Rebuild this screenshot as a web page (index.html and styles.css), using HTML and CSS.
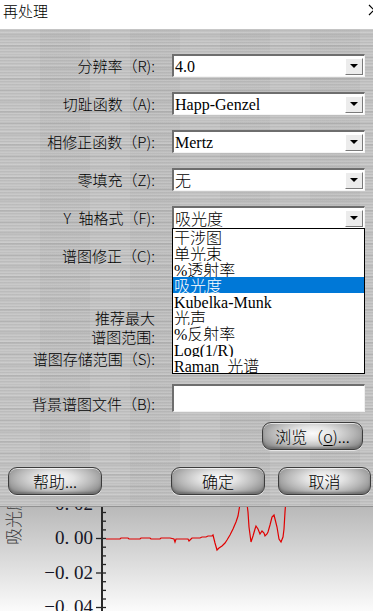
FILE: index.html
```html
<!DOCTYPE html>
<html lang="zh-CN">
<head>
<meta charset="utf-8">
<title>再处理</title>
<link rel="stylesheet" href="styles.css">
</head>
<body>
<div class="window">
  <header class="titlebar">
    <span class="title">再处理</span>
    <svg class="close" width="12" height="12" viewBox="0 0 12 12"><path d="M1 1 L11 11 M11 1 L1 11" stroke="#000" stroke-width="1.2" fill="none"/></svg>
  </header>
  <main class="dialog">
    <div class="row first">
      <span class="label">分辨率（R):</span>
      <div class="combo"><span class="val"><span class="lat">4.0</span></span><span class="drop"></span></div>
    </div>
    <div class="row">
      <span class="label">切趾函数（A):</span>
      <div class="combo"><span class="val"><span class="lat">Happ-Genzel</span></span><span class="drop"></span></div>
    </div>
    <div class="row">
      <span class="label">相修正函数（P):</span>
      <div class="combo"><span class="val"><span class="lat">Mertz</span></span><span class="drop"></span></div>
    </div>
    <div class="row">
      <span class="label">零填充（Z):</span>
      <div class="combo"><span class="val">无</span><span class="drop"></span></div>
    </div>
    <div class="row">
      <span class="label">Y&ensp;轴格式（F):</span>
      <div class="combo"><span class="val">吸光度</span><span class="drop"></span></div>
    </div>
    <div class="row">
      <span class="label">谱图修正（C):</span>
      <div class="combo"><span class="val">无</span><span class="drop"></span></div>
    </div>
    <div class="row range">
      <span class="label two">推荐最大<br>谱图范围:</span>
    </div>
    <div class="row store">
      <span class="label">谱图存储范围（S):</span>
    </div>
    <div class="row bg">
      <span class="label">背景谱图文件（B):</span>
      <div class="textbox"></div>
    </div>
    <div class="row browse">
      <button class="btn3d browse-btn">浏览（<u>o</u>)...</button>
    </div>
    <div class="row actions">
      <button class="btn3d help">帮助...</button>
      <button class="btn3d ok">确定</button>
      <button class="btn3d cancel">取消</button>
    </div>
    <ul class="droplist">
      <li>干涉图</li>
      <li>单光束</li>
      <li><span class="lat">%</span>透射率</li>
      <li class="sel">吸光度</li>
      <li><span class="lat">Kubelka-Munk</span></li>
      <li>光声</li>
      <li><span class="lat">%</span>反射率</li>
      <li><span class="lat">Log(1/R)</span></li>
      <li><span class="lat">Raman&ensp;</span>光谱</li>
    </ul>
  </main>
  <div class="chart">
    <svg width="373" height="104" viewBox="0 0 373 104">
      <defs>
        <linearGradient id="bgfade" x1="0" y1="0" x2="0" y2="1">
          <stop offset="0" stop-color="#b9b9b9"/>
          <stop offset="1" stop-color="#fbfbfb"/>
        </linearGradient>
      </defs>
      <rect x="0" y="0" width="373" height="104" fill="url(#bgfade)"/>
      <text class="ylabel" transform="translate(20,38) rotate(-90)">吸光度</text>
      <text class="tick" x="93" y="3" text-anchor="end">0. 02</text>
      <text class="tick" x="93" y="37" text-anchor="end">0. 00</text>
      <text class="tick" x="93" y="71.5" text-anchor="end">−0. 02</text>
      <text class="tick" x="93" y="106" text-anchor="end">−0. 04</text>
      <line x1="102" y1="0" x2="102" y2="104" stroke="#2a2a2a" stroke-width="2"/>
      <g stroke="#222" stroke-width="1.3">
        <line x1="96" y1="31.5" x2="101" y2="31.5"/>
        <line x1="96" y1="66" x2="101" y2="66"/>
        <line x1="96" y1="100.5" x2="101" y2="100.5"/>
        <line x1="103" y1="5.5" x2="106" y2="5.5"/>
        <line x1="103" y1="14.2" x2="106" y2="14.2"/>
        <line x1="103" y1="22.9" x2="106" y2="22.9"/>
        <line x1="103" y1="31.5" x2="106" y2="31.5"/>
        <line x1="103" y1="40.2" x2="106" y2="40.2"/>
        <line x1="103" y1="48.9" x2="106" y2="48.9"/>
        <line x1="103" y1="57.5" x2="106" y2="57.5"/>
        <line x1="103" y1="66" x2="106" y2="66"/>
        <line x1="103" y1="74.7" x2="106" y2="74.7"/>
        <line x1="103" y1="83.4" x2="106" y2="83.4"/>
        <line x1="103" y1="92" x2="106" y2="92"/>
        <line x1="103" y1="100.5" x2="106" y2="100.5"/>
      </g>
      <polyline fill="none" stroke="#e00000" stroke-width="1.2" points="106,32 120,32 121,31 128,31 129,32 140,32 141,31 150,31 151,32 160,32 161,31 170,31 174,32 175,35 176,32 188,32 189,34 190,33 192,31 200,31 202,30 206,30 208,29 212,29 213,28 215,36 217,43 219,41 222,39 225,36 227,33 230,28 233,22 236,15 238,9 239,3 240,-3 244,-12 247,-3 248,5 249,20 251,35 253,29 255,22 256,19 258,22 260,27 262,24 264,26 265,29 267,27 268,25 270,18 272,10 274,8 275,12 277,20 279,32 281,35 283,30 284,22 285,5 286,-8"/>
    </svg>
  </div>
</div>
</body>
</html>
```

FILE: styles.css
```css
html, body {
  margin: 0;
  padding: 0;
  background: #ffffff;
  overflow: hidden;
}

.window {
  width: 373px;
  height: 612px;
  overflow: hidden;
  display: flex;
  flex-direction: column;
  font-family: "Noto Sans CJK SC", sans-serif;
  color: #000;
}

.titlebar {
  height: 29px;
  flex: none;
  background: #ffffff;
  display: flex;
  justify-content: space-between;
  align-items: flex-start;
  overflow: hidden;
}

.title {
  font-size: 15px;
  line-height: 22px;
  padding-left: 3px;
  font-weight: 300;
}

.close {
  margin-top: 4px;
  margin-right: -7px;
}

.dialog {
  position: relative;
  height: 478px;
  flex: none;
  box-sizing: border-box;
  padding-top: 25px;
  border-bottom: 1px solid #929292;
  background-color: #c1c1c1;
  background-image:
    repeating-linear-gradient(180deg, rgba(255,255,255,0.10) 0 1px, rgba(0,0,0,0.035) 1px 2px, transparent 2px 3px),
    repeating-linear-gradient(180deg, transparent 0 3px, rgba(255,255,255,0.07) 3px 5px, rgba(0,0,0,0.05) 5px 7px, transparent 7px 11px),
    repeating-linear-gradient(90deg, rgba(255,255,255,0.03) 0 40px, rgba(0,0,0,0.02) 40px 90px);
  display: flex;
  flex-direction: column;
}

.row {
  display: flex;
  align-items: center;
  height: 23px;
  margin-top: 15px;
  flex: none;
}

.row.first {
  margin-top: 0;
}

.label {
  width: 155px;
  margin-right: 17px;
  text-align: right;
  font-size: 15px;
  line-height: 20px;
  font-weight: 300;
  white-space: nowrap;
  flex: none;
}

.label.two {
  line-height: 19px;
}

.row.range {
  height: 38px;
  margin-top: 41px;
}

.row.store {
  height: 20px;
  margin-top: 3px;
}

.row.bg {
  height: 28px;
  margin-top: 15px;
  align-items: flex-start;
}

.row.bg .label {
  padding-top: 10px;
}

.combo {
  width: 193px;
  height: 23px;
  box-sizing: border-box;
  background: #ffffff;
  border-top: 2px solid #6e6e6e;
  border-left: 2px solid #6e6e6e;
  border-bottom: 1px solid #f4f4f4;
  border-right: 1px solid #f4f4f4;
  display: flex;
  align-items: center;
  justify-content: space-between;
  flex: none;
}

.val {
  font-size: 16px;
  line-height: 19px;
  padding-left: 1px;
  font-weight: 300;
  white-space: nowrap;
}

.lat {
  font-family: "Liberation Serif", serif;
  font-size: 16px;
  font-weight: 400;
}

.drop {
  width: 18px;
  height: 17px;
  box-sizing: border-box;
  margin-right: 1px;
  background: #ececec;
  border-top: 1px solid #ffffff;
  border-left: 1px solid #ffffff;
  border-right: 1px solid #7a7a7a;
  border-bottom: 1px solid #7a7a7a;
  display: flex;
  align-items: center;
  justify-content: center;
}

.drop::after {
  content: "";
  width: 0;
  height: 0;
  border-left: 4px solid transparent;
  border-right: 4px solid transparent;
  border-top: 4px solid #000;
}

.textbox {
  width: 193px;
  height: 28px;
  box-sizing: border-box;
  background: #ffffff;
  border-top: 2px solid #6e6e6e;
  border-left: 2px solid #6e6e6e;
  border-bottom: 1px solid #f0f0f0;
  border-right: 1px solid #f0f0f0;
  flex: none;
}

.row.browse {
  height: 28px;
  margin-top: 10px;
  justify-content: flex-end;
  padding-right: 10px;
}

.row.actions {
  height: 28px;
  margin-top: 17px;
  padding-left: 8px;
}

.btn3d {
  height: 28px;
  box-sizing: border-box;
  border: 1px solid #3c3c3c;
  border-radius: 9px;
  padding: 0;
  font-family: "Noto Sans CJK SC", sans-serif;
  font-size: 16px;
  font-weight: 300;
  line-height: 24px;
  color: #000;
  background:
    radial-gradient(ellipse 58% 75% at 50% 40%, #fafafa 0%, #e4e4e4 35%, #b6b6b6 72%, #8c8c8c 100%);
  box-shadow: inset 0 1px 0 rgba(255,255,255,0.7), inset 0 -2px 2px rgba(60,60,60,0.35), 0 1px 0 rgba(255,255,255,0.6);
  flex: none;
}

.btn3d u {
  text-underline-offset: 2px;
}

.browse-btn {
  width: 101px;
}

.help {
  width: 94px;
}

.ok {
  width: 94px;
  margin-left: 69px;
}

.cancel {
  width: 93px;
  margin-left: 13px;
}

.droplist {
  position: absolute;
  top: 199px;
  left: 172px;
  width: 193px;
  box-sizing: border-box;
  margin: 0;
  padding: 0;
  list-style: none;
  background: #ffffff;
  border: 1px solid #000;
}

.droplist li {
  height: 16px;
  line-height: 16px;
  font-size: 16px;
  font-weight: 300;
  padding-left: 1px;
  white-space: nowrap;
  overflow: hidden;
}

.droplist li.sel {
  background: #0078d7;
  color: #ffffff;
}

.chart {
  height: 104px;
  flex: none;
  overflow: hidden;
}

.chart svg {
  display: block;
}

.ylabel {
  font-family: "Noto Sans CJK SC", sans-serif;
  font-size: 17px;
  font-weight: 300;
  fill: #3a3a3a;
}

.tick {
  font-family: "Liberation Serif", serif;
  font-size: 19px;
  fill: #161626;
}
```
